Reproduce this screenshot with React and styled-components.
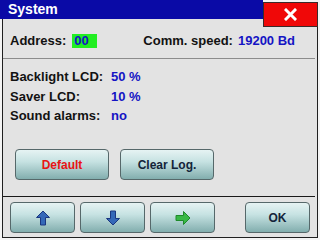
import React from "react";
import styled, { createGlobalStyle } from "styled-components";

const GlobalStyle = createGlobalStyle`
  html, body {
    margin: 0;
    padding: 0;
    background: #f4f4f4;
  }
  * {
    box-sizing: border-box;
  }
`;

const Screen = styled.div`
  position: relative;
  width: 320px;
  height: 240px;
  overflow: hidden;
  font-family: "Liberation Sans", Arial, sans-serif;
  font-weight: bold;
  font-size: 13px;
  color: #101010;
  display: flex;
  flex-direction: column;
`;

const TitleBar = styled.div`
  height: 19px;
  width: 263px;
  background: #0a0aa6;
  color: #ffffff;
  font-size: 14px;
  line-height: 18px;
  padding-left: 8px;
`;

const CloseButton = styled.button`
  position: absolute;
  top: 2px;
  left: 263px;
  width: 55px;
  height: 25px;
  padding: 0;
  border: 1px solid #3a2a2a;
  background: #f00808;
  display: flex;
  align-items: center;
  justify-content: center;
`;

const Body = styled.div`
  margin: 0 2px;
  height: 219px;
  background: #e3e3e3;
  border: 1px solid #202020;
  border-top: none;
  display: flex;
  flex-direction: column;
`;

const AddressRow = styled.div`
  height: 39px;
  display: flex;
  align-items: center;
  padding: 4px 0 0 7px;
`;

const Label = styled.span`
  color: #121212;
  white-space: nowrap;
`;

const Value = styled.span`
  color: #1414c4;
  white-space: nowrap;
`;

const AddressBox = styled.span`
  margin-left: 6px;
  width: 25px;
  height: 14px;
  background: #22ee22;
  color: #1414c4;
  line-height: 14px;
  padding-left: 2px;
`;

const Gap = styled.span`
  width: ${(p) => p.w}px;
  flex: none;
`;

const Separator = styled.div`
  height: 1px;
  margin-right: 2px;
  background: ${(p) => (p.dark ? "#1a1a1a" : "#8c8c8c")};
`;

const Settings = styled.div`
  display: grid;
  grid-template-columns: 101px auto;
  grid-auto-rows: 19.5px;
  align-items: center;
  padding: 8px 0 0 7px;
  height: 90px;
`;

const ActionRow = styled.div`
  display: flex;
  gap: 11px;
  padding-left: 12px;
  height: 47px;
`;

const Button = styled.button`
  width: ${(p) => p.w || 65}px;
  height: 31px;
  padding: 0;
  border: 1px solid #56686a;
  border-radius: 4px;
  background: linear-gradient(#e6f3f3 0%, #c6e2e2 40%, #82aeae 100%);
  font-family: "Liberation Sans", Arial, sans-serif;
  font-weight: bold;
  font-size: 12px;
  color: ${(p) => (p.danger ? "#e81414" : "#13243a")};
  display: flex;
  align-items: center;
  justify-content: center;
  margin-left: ${(p) => p.ml || 0}px;
`;

const NavRow = styled.div`
  display: flex;
  gap: 5px;
  padding: 5px 0 0 7px;
`;

const Arrow = ({ dir, fill, stroke }) => {
  const rot = { up: 0, down: 180, right: 90 }[dir];
  return (
    <svg width="16" height="16" viewBox="0 0 16 16">
      <path
        d="M8 1 L14.5 7.5 L10.5 7.5 L10.5 15 L5.5 15 L5.5 7.5 L1.5 7.5 Z"
        fill={fill}
        stroke={stroke}
        strokeWidth="1"
        strokeLinejoin="round"
        transform={`rotate(${rot} 8 8)`}
      />
    </svg>
  );
};

export default function App() {
  return (
    <Screen>
      <GlobalStyle />
      <TitleBar>System</TitleBar>
      <CloseButton>
        <svg width="13" height="13" viewBox="0 0 13 13">
          <path d="M2 2 L11 11 M11 2 L2 11" stroke="#ffffff" strokeWidth="3" strokeLinecap="square" />
        </svg>
      </CloseButton>
      <Body>
        <AddressRow>
          <Label>Address:</Label>
          <AddressBox>00</AddressBox>
          <Gap w={46} />
          <Label>Comm. speed:</Label>
          <Gap w={5} />
          <Value>19200 Bd</Value>
        </AddressRow>
        <Separator />
        <Settings>
          <Label>Backlight LCD:</Label>
          <Value>50 %</Value>
          <Label>Saver LCD:</Label>
          <Value>10 %</Value>
          <Label>Sound alarms:</Label>
          <Value>no</Value>
        </Settings>
        <ActionRow>
          <Button w={94} danger>Default</Button>
          <Button w={94}>Clear Log.</Button>
        </ActionRow>
        <Separator dark />
        <NavRow>
          <Button><Arrow dir="up" fill="#3468b8" stroke="#1a3680" /></Button>
          <Button><Arrow dir="down" fill="#3468b8" stroke="#1a3680" /></Button>
          <Button><Arrow dir="right" fill="#38b846" stroke="#1e8a2a" /></Button>
          <Button ml={25}>OK</Button>
        </NavRow>
      </Body>
    </Screen>
  );
}
